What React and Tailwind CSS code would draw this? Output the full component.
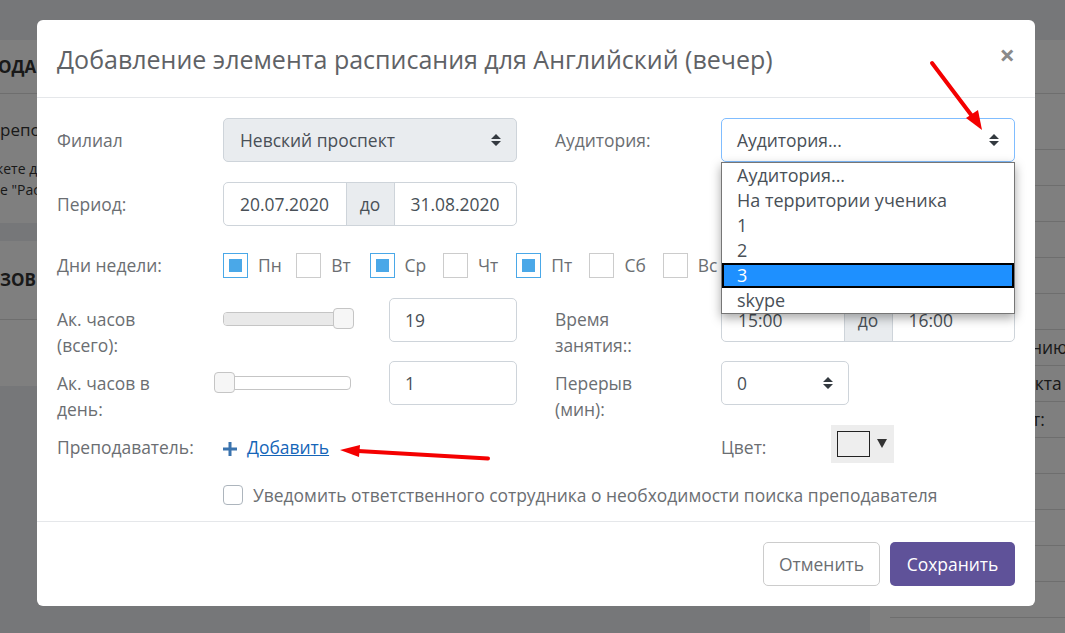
const Arrows = () => (
  <svg className="shrink-0" width="10" height="12" viewBox="0 0 10 12">
    <path d="M5 0 L10 5 L0 5 Z M0 7 L10 7 L5 12 Z" fill="#343a40" />
  </svg>
);

const Label = ({ children, className = "" }) => (
  <div className={"w-[166px] shrink-0 text-[#6b6e72] leading-[25.6px] " + className}>{children}</div>
);

const Field = ({ className = "", children }) => (
  <div className={"h-[44px] flex items-center pl-[15px] pr-[15px] border border-[#ced4da] rounded-[5px] bg-white text-[#495057] " + className}>{children}</div>
);

const Group = ({ a, b }) => (
  <div className="w-[294px] h-[44px] flex border border-[#ced4da] rounded-[5px] bg-white text-[#495057]">
    <div className="flex-1 flex items-center pl-4">{a}</div>
    <div className="w-[49px] flex items-center justify-center bg-[#e9ecef] border-x border-[#ced4da]">до</div>
    <div className="flex-1 flex items-center pl-4">{b}</div>
  </div>
);

const Day = ({ name, on }) => (
  <div className="w-[73.3px] flex items-center shrink-0">
    <div className={"w-[25px] h-[25px] border flex items-center justify-center bg-white " + (on ? "border-[#4aa8e8]" : "border-[#cccccc]")}>
      {on && <div className="w-[13px] h-[13px] bg-[#4aa8e8]" />}
    </div>
    <span className="ml-[10px] text-[#6b6e72]">{name}</span>
  </div>
);

const Slider = ({ full }) => (
  <div className="relative w-[128px] h-[14px] shrink-0 border border-[#c5c5c5] rounded-[4px] bg-white">
    {full && <div className="h-full w-[110px] bg-[#e9e9e9] rounded-l-[3px]" />}
    <div className={"absolute top-[-5px] w-[21px] h-[21px] border border-[#c5c5c5] rounded-[4px] bg-[#f6f6f6] " + (full ? "left-[109px]" : "left-[-10px]")} />
  </div>
);

const options = ["Аудитория...", "На территории ученика", "1", "2", "3", "skype"];
const rightRows = ["", "", "", "", "", "нию", "укта", "т:", "", "", "", "", "ОПЛАЧЕННЫХ:"];
const rowEnds = { "нию": "pl-[141px]", "укта": "pl-[136px]", "т:": "pl-[142px]" };

export default function App() {
  return (
    <div className="relative w-[1065px] h-[633px] overflow-hidden bg-[#eceef2] font-['Open_Sans',sans-serif] text-[17.45px]">
      <div className="flex pt-[40px] h-full">
        <div className="w-[870px] shrink-0 flex flex-col gap-[18px] overflow-hidden">
          <div className="w-[850px] h-[183px] bg-white text-[#333] flex flex-col">
            <div className="h-[54px] flex items-center border-b border-[#dddddd] font-bold text-[17px] whitespace-nowrap pt-[1px]">
              <span className="w-[37px] overflow-hidden"><span className="block -ml-[2px]">ОДА</span></span>
            </div>
            <div className="w-[37px] overflow-hidden mt-[23px] text-[17px] whitespace-nowrap">репо</div>
            <div className="w-[37px] overflow-hidden mt-[15px] text-[14px] leading-[21px] whitespace-nowrap"><span className="block -ml-[4px]">кете д</span></div>
            <div className="w-[37px] overflow-hidden text-[14px] leading-[21px] whitespace-nowrap">е "Рас</div>
          </div>
          <div className="w-[850px] h-[145px] bg-white text-[#333]">
            <div className="h-[79px] flex items-center border-b border-[#dddddd] font-bold text-[17px] whitespace-nowrap">
              <span className="w-[37px] overflow-hidden">ЗОВ</span>
            </div>
          </div>
        </div>
        <div className="flex-1 bg-white pl-[20px] text-[#333] overflow-hidden">
          <div className="h-[54px] border-b border-[#dddddd]" />
          <div className="h-[56px] border-b border-[#dddddd]" />
          {rightRows.map((t, i) => (
            <div key={i} className={"h-[36px] border-b border-[#dddddd] flex items-center whitespace-nowrap " + (rowEnds[t] || "") + (i === 12 ? " font-bold text-[14px] pl-[7px] pt-[1px]" : "")}>{t}</div>
          ))}
        </div>
      </div>

      <div className="absolute inset-0 bg-black/50 pl-[37px] pt-[20px]">
        <div className="w-[998px] h-[586px] bg-white rounded-[6px] flex flex-col">
          <div className="h-[78px] shrink-0 border-b border-[#e5e7ea] pl-[20px] pr-[21px] flex items-start justify-between">
            <div className="text-[25px] leading-[36px] mt-[21px] text-[#5f6266]">Добавление элемента расписания для Английский (вечер)</div>
            <div className="text-[27px] leading-[30px] font-bold text-[#8a8a8a] mt-[20px] mr-[-1px]">×</div>
          </div>

          <div className="flex-1 pl-[20px] pt-[20px]">
            <div className="flex h-[44px] items-center">
              <Label className="pt-[2px]">Филиал</Label>
              <Field className="w-[294px] justify-between !bg-[#e9ecef] !pl-[16px]">
                <span>Невский проспект</span>
                <Arrows />
              </Field>
              <Label className="ml-[38px] pt-[2px]">Аудитория:</Label>
              <div className="relative w-[294px]">
                <Field className="justify-between !border-[#80bdff]">
                  <span>Аудитория...</span>
                  <Arrows />
                </Field>
                <div className="absolute z-10 left-0 top-[44px] w-[294px] bg-white border border-[#767676] shadow-[0_4px_10px_rgba(0,0,0,0.35)] text-[#495057] text-[18px]">
                  {options.map((o) => (
                    <div key={o} className={"h-[25px] " + (o === "3" ? "bg-[#1e90ff] text-white border-2 border-black pl-[13px] leading-[21px]" : "pl-[15px] leading-[24px]")}>{o}</div>
                  ))}
                </div>
              </div>
            </div>

            <div className="flex h-[44px] items-center mt-[20px]">
              <Label className="pt-[2px]">Период:</Label>
              <Group a="20.07.2020" b="31.08.2020" />
            </div>

            <div className="flex h-[25px] items-center mt-[27px]">
              <Label>Дни недели:</Label>
              <Day name="Пн" on />
              <Day name="Вт" />
              <Day name="Ср" on />
              <Day name="Чт" />
              <Day name="Пт" on />
              <Day name="Сб" />
              <Day name="Вс" />
            </div>

            <div className="flex h-[44px] mt-[20px]">
              <Label className="pt-[9px] pr-[40px]">Ак. часов (всего):</Label>
              <div className="w-[166px] shrink-0 pt-[14px]"><Slider full /></div>
              <Field className="w-[128px]">19</Field>
              <Label className="ml-[38px] pt-[9px] pr-[40px]">Время занятия::</Label>
              <Group a="15:00" b="16:00" />
            </div>

            <div className="flex h-[44px] mt-[19px]">
              <Label className="pt-[10px] pr-[40px]">Ак. часов в день:</Label>
              <div className="w-[166px] shrink-0 pt-[15px]"><Slider /></div>
              <Field className="w-[128px]">1</Field>
              <Label className="ml-[38px] pt-[10px] pr-[40px]">Перерыв (мин):</Label>
              <Field className="w-[128px] justify-between">
                <span>0</span>
                <Arrows />
              </Field>
            </div>

            <div className="flex h-[38px] mt-[20px]">
              <Label className="pt-[10px]">Преподаватель:</Label>
              <div className="w-[498px] shrink-0 pt-[10px] flex items-start">
                <svg width="14" height="14" viewBox="0 0 14 14" className="shrink-0 mt-[7px]">
                  <path d="M5.5 0h3v5.5H14v3H8.5V14h-3V8.500H0v-3h5.500z" fill="#3a73ae" />
                </svg>
                <a className="ml-[10px] text-[#1565b8] underline leading-[25.6px]">Добавить</a>
              </div>
              <Label className="!w-[110px] pt-[10px]">Цвет:</Label>
              <div className="w-[63px] h-[38px] bg-[#ededed] flex items-start pl-[6px] pt-[6px]">
                <div className="w-[33px] h-[26px] bg-[#eeeeee] border border-[#222222]" />
                <svg width="10" height="9" viewBox="0 0 10 9" className="ml-[7px] mt-[8px] shrink-0">
                  <path d="M0 0h10L5 9z" fill="#333333" />
                </svg>
              </div>
            </div>

            <div className="flex items-center h-[26px] mt-[19px] pl-[166px]">
              <div className="w-[20px] h-[20px] rounded-[4px] border border-[#adb5bd] bg-white shrink-0" />
              <span className="ml-[10px] text-[#6b6e72]">Уведомить ответственного сотрудника о необходимости поиска преподавателя</span>
            </div>
          </div>

          <div className="h-[85px] shrink-0 border-t border-[#e5e7ea] flex items-center justify-end gap-[10px] pr-[20px]">
            <button className="w-[117px] h-[44px] border border-[#cccccc] rounded-[5px] bg-white text-[#6b6e72]">Отменить</button>
            <button className="w-[125px] h-[44px] rounded-[5px] bg-[#5f5299] text-white">Сохранить</button>
          </div>
        </div>
      </div>

      <svg className="absolute inset-0 z-20" width="1065" height="633" viewBox="0 0 1065 633">
        <path d="M932 63 L972 116" stroke="#f40000" strokeWidth="4" strokeLinecap="round" fill="none" />
        <path d="M982 130 L966 118 L978 110 Z" fill="#f40000" />
        <path d="M488 458.500 L358 451" stroke="#f40000" strokeWidth="4" strokeLinecap="round" fill="none" />
        <path d="M340 450 L360 445 L359 457 Z" fill="#f40000" />
      </svg>
    </div>
  );
}
